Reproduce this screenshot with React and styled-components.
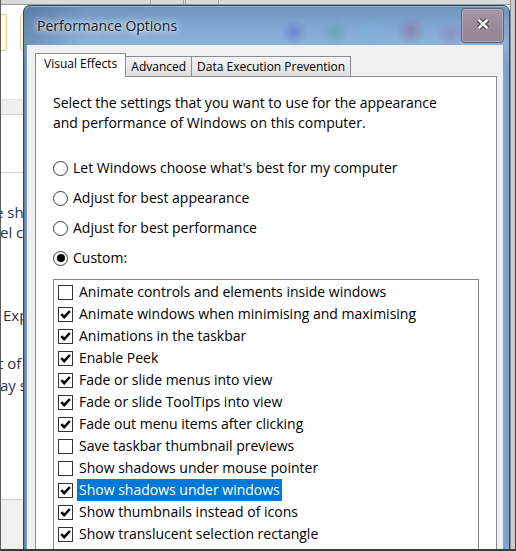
import React from "react";
import styled, { createGlobalStyle } from "styled-components";

const UI_FONT = `"Open Sans", "Noto Sans", "Liberation Sans", sans-serif`;

const GlobalStyle = createGlobalStyle`
  html, body {
    margin: 0;
    padding: 0;
    background: #d2d2d2;
    overflow: hidden;
  }
  * {
    box-sizing: border-box;
  }
`;

const effects = [
  { label: "Animate controls and elements inside windows", on: false },
  { label: "Animate windows when minimising and maximising", on: true },
  { label: "Animations in the taskbar", on: true },
  { label: "Enable Peek", on: true },
  { label: "Fade or slide menus into view", on: true },
  { label: "Fade or slide ToolTips into view", on: true },
  { label: "Fade out menu items after clicking", on: true },
  { label: "Save taskbar thumbnail previews", on: false },
  { label: "Show shadows under mouse pointer", on: false },
  { label: "Show shadows under windows", on: true, selected: true },
  { label: "Show thumbnails instead of icons", on: true },
  { label: "Show translucent selection rectangle", on: true },
  { label: "Show window contents while dragging", on: true },
  { label: "Smooth edges of screen fonts", on: true },
];

const options = [
  { label: "Let Windows choose what's best for my computer", on: false },
  { label: "Adjust for best appearance", on: false },
  { label: "Adjust for best performance", on: false },
  { label: "Custom:", on: true },
];

const App = () => {
  return (
    <>
      <GlobalStyle />
      <Screen>
        <BackWindow>
          <TopBar>
            <TopCell $w={150} />
            <TopCell $w={33} />
            <TopCell $w={2} />
            <TopCell $w={33} />
          </TopBar>
          <NoteRow>
            <Note $w={6} $cut />
            <Note $w={40} />
          </NoteRow>
          <Band />
          <Rule />
          <BackPara $top={29} $lh={20}>
            <BackLine $x={-6}>e shadows</BackLine>
            <BackLine $x={-1}>el colour</BackLine>
          </BackPara>
          <BackPara $top={63} $lh={20}>
            <BackLine $x={2}>Explorer</BackLine>
          </BackPara>
          <BackPara $top={27} $lh={22}>
            <BackLine $x={-3}>t of the</BackLine>
            <BackLine $x={-1}>ay show</BackLine>
          </BackPara>
          <BackFooter />
        </BackWindow>

        <Dialog>
          <TitleBar>
            <Title>Performance Options</Title>
            <CloseButton aria-label="Close">
              <svg width="14" height="12" viewBox="0 0 14 12">
                <path d="M2.6 1.8 L11.4 10.2 M11.4 1.8 L2.6 10.2" stroke="#2a2a32" strokeWidth="4.6" />
                <path d="M2.6 1.8 L11.4 10.2 M11.4 1.8 L2.6 10.2" stroke="#ffffff" strokeWidth="2.6" />
              </svg>
            </CloseButton>
          </TitleBar>

          <Client>
            <TabRow>
              <Tab $active>Visual Effects</Tab>
              <Tab>Advanced</Tab>
              <Tab>Data Execution Prevention</Tab>
            </TabRow>

            <Panel>
              <Description>
                Select the settings that you want to use for the appearance
                <br />
                and performance of Windows on this computer.
              </Description>

              <RadioGroup>
                {options.map((o) => (
                  <RadioRow key={o.label}>
                    <RadioCircle $on={o.on} />
                    <span>{o.label}</span>
                  </RadioRow>
                ))}
              </RadioGroup>

              <ListBox>
                {effects.map((e) => (
                  <ListItem key={e.label}>
                    <CheckBox>
                      {e.on && (
                        <svg width="13" height="13" viewBox="0 0 13 13">
                          <path
                            d="M2.3 6.2 L5.2 9.2 L10.9 3"
                            fill="none"
                            stroke="#000"
                            strokeWidth="2.5"
                          />
                        </svg>
                      )}
                    </CheckBox>
                    <ItemLabel $selected={e.selected}>{e.label}</ItemLabel>
                  </ListItem>
                ))}
              </ListBox>
            </Panel>
          </Client>
        </Dialog>
      </Screen>
    </>
  );
};

export default App;

const Screen = styled.div`
  position: relative;
  width: 516px;
  height: 551px;
  overflow: hidden;
  background: #cdcdcd;
  border-left: 1px solid #5b5b5b;
  border-right: 1px solid #474747;
  border-bottom: 2px solid #3a3a3a;
  font-family: ${UI_FONT};
`;

/* the window behind the dialog */
const BackWindow = styled.div`
  display: flex;
  flex-direction: column;
  width: 510px;
  height: 100%;
  background: #ffffff;
  border-right: 1px solid #8e8e8e;
`;

const TopBar = styled.div`
  display: flex;
  height: 5px;
  background: #dadada;
  border-bottom: 1px solid #9a9a9a;
`;

const TopCell = styled.div`
  width: ${(p) => p.$w}px;
  border-right: 1px solid #a4a4a4;
`;

const NoteRow = styled.div`
  display: flex;
  gap: 13px;
  margin-top: 9px;
  height: 37px;
`;

const Note = styled.div`
  width: ${(p) => p.$w}px;
  background: #fffbe0;
  border: 1px solid #d8d0a2;
  border-left: ${(p) => (p.$cut ? "none" : "1px solid #d8d0a2")};
  border-radius: ${(p) => (p.$cut ? "0 3px 3px 0" : "3px")};
`;

const Band = styled.div`
  margin-top: 48px;
  height: 16px;
  background: #efefef;
  border-top: 1px solid #e2e2e2;
  border-bottom: 1px solid #d2d2d2;
`;

const Rule = styled.div`
  margin-top: 57px;
  height: 1px;
  background: #d6d6d6;
`;

const BackPara = styled.div`
  margin-top: ${(p) => p.$top}px;
  font-size: 15px;
  line-height: ${(p) => p.$lh}px;
  color: #283449;
  white-space: nowrap;
`;

const BackLine = styled.div`
  margin-left: ${(p) => p.$x}px;
`;

const BackFooter = styled.div`
  margin-top: auto;
  height: 50px;
  background: #f0f0f0;
  border-top: 1px solid #cfcfcf;
`;

/* Performance Options dialog, floating over the desktop */
const Dialog = styled.div`
  position: absolute;
  left: 22px;
  top: 5px;
  width: 487px;
  height: 600px;
  display: flex;
  flex-direction: column;
  padding: 0 5px 0 2px;
  border: 1px solid #34465b;
  border-radius: 7px 7px 0 0;
  background:
    linear-gradient(90deg, rgba(30, 60, 100, 0.28) 0px, rgba(30, 60, 100, 0) 60px),
    radial-gradient(circle at 270px 26px, rgba(70, 80, 210, 0.4), rgba(70, 80, 210, 0) 13px),
    radial-gradient(circle at 310px 26px, rgba(80, 150, 140, 0.38), rgba(80, 150, 140, 0) 14px),
    radial-gradient(circle at 349px 26px, rgba(115, 185, 225, 0.35), rgba(115, 185, 225, 0) 15px),
    radial-gradient(circle at 387px 24px, rgba(150, 85, 135, 0.42), rgba(150, 85, 135, 0) 15px),
    radial-gradient(circle at 427px 27px, rgba(150, 105, 170, 0.35), rgba(150, 105, 170, 0) 15px),
    linear-gradient(180deg, #6b93be 0px, #7ea6d1 18px, #8ab1da 38px, #7ba4d0 60px, #7ba4d0 100%);
  box-shadow: inset 0 1px 0 rgba(255, 255, 255, 0.35);
`;

const TitleBar = styled.div`
  display: flex;
  align-items: center;
  justify-content: space-between;
  height: 39px;
  padding-left: 11px;
  flex-shrink: 0;
`;

const Title = styled.div`
  font-size: 14px;
  line-height: 20px;
  color: #161616;
  text-shadow:
    0 0 10px rgba(255, 255, 255, 0.9),
    0 0 6px rgba(255, 255, 255, 0.75),
    0 0 2px rgba(255, 255, 255, 0.6);
`;

const CloseButton = styled.div`
  display: flex;
  align-items: center;
  justify-content: center;
  width: 43px;
  height: 35px;
  padding-bottom: 4px;
  border: 1px solid #5c6478;
  border-radius: 4px;
  background: linear-gradient(180deg, #a595a5 0%, #9b8a9a 50%, #988596 100%);
  box-shadow: inset 0 0 0 1px rgba(255, 255, 255, 0.25);
`;

const Client = styled.div`
  flex: 1;
  display: flex;
  flex-direction: column;
  padding: 8px 6px 0 8px;
  background: #f0f0f0;
  border-left: 1px solid #8ea3bb;
  border-right: 1px solid #8ea3bb;
`;

const TabRow = styled.div`
  display: flex;
  align-items: flex-start;
  height: 24px;
  margin-bottom: -1px;
  position: relative;
  z-index: 1;
`;

const Tab = styled.div`
  height: ${(p) => (p.$active ? 24 : 20)}px;
  margin-top: ${(p) => (p.$active ? 0 : 3)}px;
  margin-left: ${(p) => (p.$active ? 0 : -1)}px;
  padding: 0 ${(p) => (p.$active ? 8 : 5)}px;
  border: 1px solid #898c95;
  border-bottom: none;
  background: ${(p) =>
    p.$active ? "#ffffff" : "linear-gradient(180deg, #f3f3f3 0%, #ebebeb 50%, #dedede 100%)"};
  font-size: 12px;
  line-height: 19px;
  color: #000;
  white-space: nowrap;
  position: relative;
  z-index: ${(p) => (p.$active ? 2 : 1)};
`;

const Panel = styled.div`
  flex: 1;
  display: flex;
  flex-direction: column;
  padding: 16px 17px 0 17px;
  background: #ffffff;
  border: 1px solid #898c95;
  color: #000;
  font-size: 14px;
  line-height: 20px;
`;

const Description = styled.p`
  margin: 0;
  white-space: nowrap;
`;

const RadioGroup = styled.div`
  display: flex;
  flex-direction: column;
  gap: 10px;
  margin-top: 25px;
`;

const RadioRow = styled.div`
  display: flex;
  align-items: center;
  gap: 5px;
  height: 20px;
  white-space: nowrap;
`;

const RadioCircle = styled.div`
  width: 15px;
  height: 15px;
  border-radius: 50%;
  border: 1px solid #3c3c3c;
  background: #fff;
  display: flex;
  align-items: center;
  justify-content: center;
  flex-shrink: 0;

  &::after {
    content: "";
    display: ${(p) => (p.$on ? "block" : "none")};
    width: 8px;
    height: 8px;
    border-radius: 50%;
    background: #000;
  }
`;

const ListBox = styled.div`
  margin-top: 11px;
  flex: 1;
  padding: 1px 0 0 4px;
  border: 1px solid #828790;
  background: #fff;
  overflow: hidden;
`;

const ListItem = styled.div`
  display: flex;
  align-items: center;
  gap: 4px;
  height: 22px;
  white-space: nowrap;
`;

const CheckBox = styled.div`
  width: 15px;
  height: 15px;
  border: 1px solid #333333;
  background: #fff;
  flex-shrink: 0;
  svg {
    display: block;
  }
`;

const ItemLabel = styled.span`
  padding: 0 2px;
  line-height: 22px;
  background: ${(p) => (p.$selected ? "#0078d7" : "transparent")};
  color: ${(p) => (p.$selected ? "#ffffff" : "#000000")};
`;
